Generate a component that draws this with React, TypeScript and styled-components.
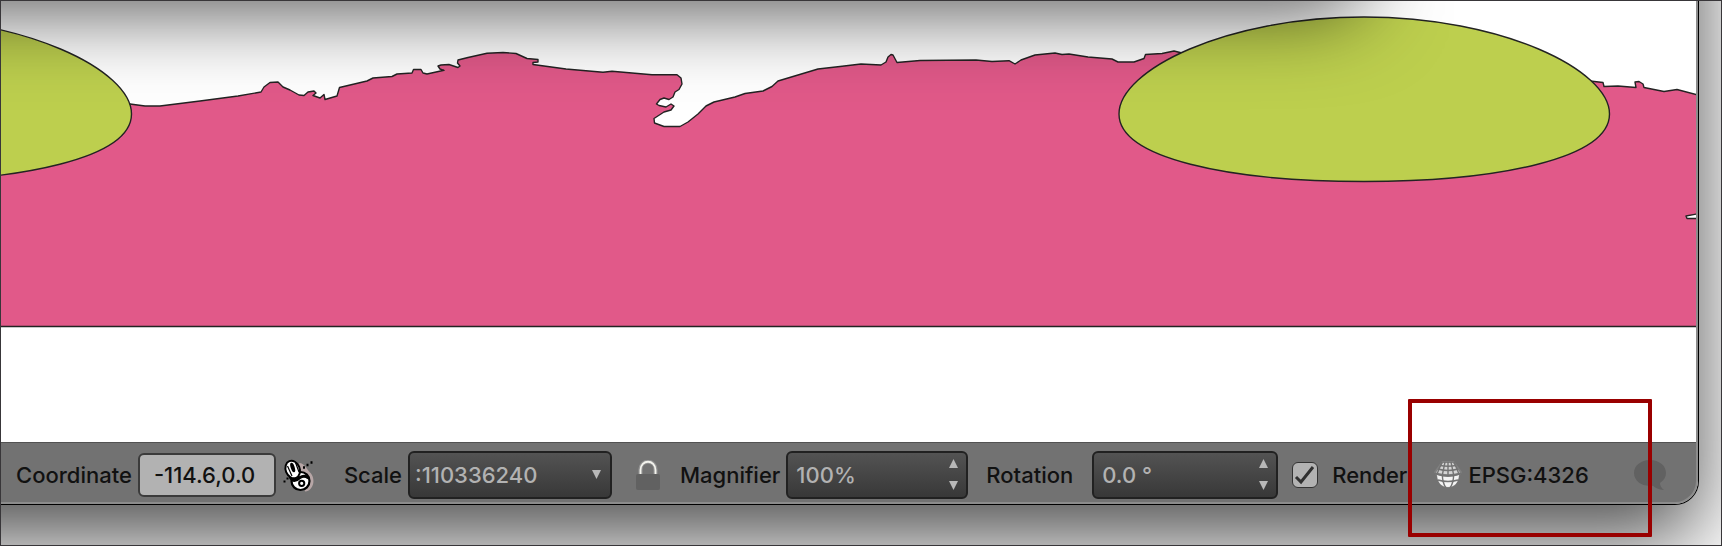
import React, { useState } from 'react';
import styled, { createGlobalStyle } from 'styled-components';

const GlobalStyle = createGlobalStyle`
  *, *::before, *::after { box-sizing: border-box; }
  body { margin: 0; background: #fff; }
  body, input, select, button { font: 500 22px/28px Inter, "Liberation Sans", sans-serif; }
`;

const Desktop = styled.div`
  position: relative;
  isolation: isolate;
  overflow: hidden;
  min-height: 100vh;
  padding: 0 22px 40px 0;
  border: 1px solid #383639;
  background: #fff;
`;

const AppWindow = styled.main`
  position: relative;
  border: solid #000;
  border-width: 0 1px 1px 0;
  border-radius: 0 0 24px 0;

  &::before {
    content: '';
    position: absolute;
    z-index: -1;
    inset: -300px 0 0 -300px;
    border-radius: 24px;
    box-shadow: 0 34px 84px rgba(0, 0, 0, 0.7);
  }
`;

const WindowBody = styled.div`
  overflow: hidden;
  border: solid #8c8c8c;
  border-width: 0 2px 2px 0;
  border-radius: 0 0 23px 0;
  background: #727272;
`;

/* Shade cast on this window by the one above it, outside the visible area. */
const UpperWindowShade = styled.div`
  position: absolute;
  left: -300px;
  right: 360px;
  top: -400px;
  height: 374px;
  pointer-events: none;
  border-radius: 24px;
  box-shadow: 0 34px 84px rgba(0, 0, 0, 0.7);
`;

const MapCanvas = styled.svg`
  display: block;
  width: 100%;
  height: auto;
  background: #fff;
`;

const StatusBar = styled.footer`
  display: flex;
  align-items: center;
  height: 60px;
  padding: 4px 30px 0 15px;
  border-top: 1px solid #525252;
  color: #111;
  white-space: nowrap;
`;

const Group = styled.div<{ $gap?: number; $before?: number }>`
  display: flex;
  align-items: center;
  flex: none;
  gap: ${(p) => p.$gap ?? 6}px;
  margin-left: ${(p) => p.$before ?? 0}px;
`;

const CoordinateInput = styled.input`
  width: 138px;
  height: 44px;
  padding: 0 14px;
  border: 2px solid #3b3b3b;
  border-radius: 6px;
  background: #b2b2b2;
  color: #111;
`;

const DarkField = styled.div<{ $width: number }>`
  display: flex;
  align-items: center;
  position: relative;
  width: ${(p) => p.$width}px;
  height: 48px;
  border: 2px solid #212121;
  border-radius: 6px;
  background: linear-gradient(#535353, #383838);
  color: #b2b2b2;
`;

const FieldSelect = styled.select`
  appearance: none;
  width: 100%;
  height: 100%;
  padding: 0 28px 0 5px;
  border: 0;
  background: transparent;
  color: inherit;
`;

const SelectArrow = styled.svg`
  position: absolute;
  right: 9px;
  pointer-events: none;
`;

const FieldInput = styled.input`
  flex: 1;
  min-width: 0;
  height: 100%;
  padding: 0 0 0 8px;
  border: 0;
  background: transparent;
  color: inherit;
`;

const Stepper = styled.div`
  display: flex;
  flex-direction: column;
  justify-content: space-between;
  height: 100%;
  padding: 5px 5px 5px 0;
`;

const IconButton = styled.button`
  display: flex;
  align-items: center;
  justify-content: center;
  flex: none;
  padding: 0;
  border: 0;
  background: transparent;
  color: inherit;
`;

const StepButton = styled(IconButton)`
  width: 16px;
  height: 12px;
`;

const MessagesButton = styled(IconButton)`
  margin-left: auto;
`;

const CheckboxBox = styled.input`
  appearance: none;
  flex: none;
  width: 26px;
  height: 26px;
  margin: 0;
  border: 1px solid #333;
  border-radius: 6px;
  background: #b2b2b2;

  &:checked {
    background: #b2b2b2
      url("data:image/svg+xml,%3Csvg xmlns='http://www.w3.org/2000/svg' viewBox='0 0 24 24' fill='none' stroke='%23303030' stroke-width='3'%3E%3Cpath d='M3 14l5 5L20 4'/%3E%3C/svg%3E")
      center / contain no-repeat;
  }
`;

const ProjectionButton = styled(IconButton)`
  gap: 6px;
  margin-left: 27px;
`;

const Highlight = styled.div`
  position: absolute;
  right: 69px;
  bottom: 8px;
  width: 244px;
  height: 138px;
  border: 4px solid #990000;
  border-radius: 1px;
  pointer-events: none;
`;

const COAST =
  'M-5 104L130 104 145 106 160 106 200 101 238 96 261 92 264 87 270 82.5 278 82 283 87 290 90 299 95 304 95.5 308 92 314 91 316 93 313 95.5 320 98 324 94.5 325 99.5 337 96 339.5 87.5 367 81 373 78 392 76.5 397 74 412 73 413.5 69.5 421 69.5 423 73 427 74 444 70.3 440 69 438 66 441 65 449 64.5 458 67.5 460 66 457.5 63 458 60 468 57.5 487 53.3 503 52.5 516 53.5 527 58.5 538 59.5 538 62 533 62.5 533 64.5 566 69 603 72.3 612 71.3 652 74.7 677 74.7 681 78 682 84 679 89.5 675 92 673 97 669 99.5 664 98 660 99.5 656.5 104 659 105.5 666 107 671 104 674 106 671 110 664 112 654 118.5 654.5 123 664 126.5 680 126.5 688 122 698 114 706 106 714 102 735 97 745 93.5 763 91 772 86.5 778 81 818 69 840 66.5 861 64 881 65 886 62 888 57 891 54.5 893 55 897 62.5 920 60.5 976 60 992 61.5 1009 60.7 1015 64 1021 60 1035 55 1055 53 1062 54.5 1069 54 1088 57 1112 59 1118 62 1134 62 1144 58.5 1145.5 54.5 1162 53.5 1174 51 1182 53 1400 70 1590 81 1603 82.5 1604 86.5 1618 86 1636 87.5 1635 82 1639 81.5 1643 84 1644 87.5 1664 91.5 1677 89.5 1702 96V326.5H-5Z';

const OVAL =
  'M1364 17C1502 17 1609.500 70 1609.500 114C1609.500 158 1500 181.500 1364 181.500C1228 181.500 1119 158 1119 114C1119 70 1226 17 1364 17Z';

function Map() {
  return (
    <MapCanvas viewBox="1 1 1695 441" role="img" aria-label="Map canvas">
      <g stroke="#232323" strokeWidth="1.4" strokeLinejoin="round">
        <path d={COAST} fill="#e15989" />
        <path d="M1702 213L1686 216 1687 218.5 1702 218.5Z" fill="#fff" />
        <g fill="#bdcf4e">
          <path d={OVAL} />
          <path d={OVAL} transform="translate(-1478 0)" />
        </g>
      </g>
    </MapCanvas>
  );
}

function Triangle({ up = false }: { up?: boolean }) {
  return (
    <svg width="9" height="9" viewBox="0 0 9 9" fill="#b8b8b8" aria-hidden="true">
      <path d={up ? 'M4.5 0L9 9H0Z' : 'M0 0H9L4.5 9Z'} />
    </svg>
  );
}

function MouseIcon() {
  return (
    <svg width="32" height="34" viewBox="-1 0 32 34" fill="none" stroke="#000" aria-hidden="true">
      <path d="M16 5C22 5 24 12 28 15.500C33 22 30 33 22 33.500Z" fill="#b7a6a6" stroke="none" />
      <path d="M0.500 23.500H2.500M3.500 20.500H5.500" strokeWidth="2" />
      <path d="M20 9.500H22M23.500 7H25.500M27.500 4.500H29.500" strokeWidth="2.400" />
      <circle cx="17.500" cy="23" r="9" fill="#fff" strokeWidth="2.200" />
      <path d="M7 18.500C10 25 14 22 17 19.500C20 17.500 23 18 25.500 20" strokeWidth="3" />
      <ellipse cx="9.700" cy="11.500" rx="7" ry="9" transform="rotate(-22 9.700 11.500)" fill="#fff" strokeWidth="2" />
      <path d="M4.500 8L9 18M12.500 4.500L16 14" strokeWidth="1.200" />
      <ellipse cx="9.700" cy="9.500" rx="2" ry="5" transform="rotate(-18 9.700 9.500)" fill="#000" stroke="none" />
      <circle cx="18.700" cy="25.300" r="2.600" fill="#fff" strokeWidth="2" />
    </svg>
  );
}

function LockIcon() {
  return (
    <svg width="24" height="30" viewBox="0 0 24 30" fill="none" aria-hidden="true">
      <path d="M4.500 14V10C4.500 -1 19.500 -1 19.500 10V14" stroke="#939393" strokeWidth="4" />
      <path d="M4.500 14V10C4.500 -1 19.500 -1 19.500 10V14" stroke="#f4f4ee" strokeWidth="1.800" />
      <rect y="14" width="24" height="16" rx="2" fill="#616161" />
    </svg>
  );
}

function GlobeIcon() {
  return (
    <svg width="28" height="28" viewBox="0 0 28 28" fill="none" aria-hidden="true">
      <path d="M8 0H20L28 11L25 16Q23 27 14 27Q5 27 3 16L0 11Z" fill="#808080" />
      <path d="M9 2H19L26 11.500Q14 15 2 11.500Z" fill="#d4d4d4" />
      <path d="M3 14Q14 18 25 14Q24 26 14 26Q4 26 3 14Z" fill="#f4f4f4" />
      <g stroke="#737373" strokeWidth="1.400">
        <path d="M6 4.500Q14 6 22 4.500M4 8Q14 11 24 8M1 12.500Q14 17 27 12.500M4 19Q14 22 24 19" />
        <path d="M11 1L8.500 13Q8 21 12 27M17 1L19.500 13Q20 21 16 27M14 1V15M8 1L3 13M20 1L25 13" />
      </g>
    </svg>
  );
}

function BubbleIcon() {
  return (
    <svg width="32" height="30" viewBox="0 0 32 30" fill="#616161" aria-hidden="true">
      <path d="M16 0C25 0 32 5.500 32 13C32 17 30 20 26 23Q26 27 30 30Q22 29 19 25.700C8 27 0 21 0 13C0 5.500 7 0 16 0Z" />
    </svg>
  );
}

interface SpinFieldProps {
  id: string;
  width: number;
  initial: string;
  name: string;
}

function SpinField({ id, width, initial, name }: SpinFieldProps) {
  const [value, setValue] = useState(initial);
  const unit = initial.endsWith('%') ? '%' : ' °';
  const step = (delta: number) => {
    const next = (parseFloat(value) || 0) + delta;
    setValue(unit === '%' ? `${next}%` : `${next.toFixed(1)} °`);
  };
  return (
    <DarkField $width={width}>
      <FieldInput id={id} value={value} onChange={(e) => setValue(e.target.value)} />
      <Stepper>
        <StepButton type="button" aria-label={`Increase ${name}`} onClick={() => step(1)}>
          <Triangle up />
        </StepButton>
        <StepButton type="button" aria-label={`Decrease ${name}`} onClick={() => step(-1)}>
          <Triangle />
        </StepButton>
      </Stepper>
    </DarkField>
  );
}

export default function App() {
  return (
    <>
      <GlobalStyle />
      <Desktop>
        <AppWindow>
          <WindowBody>
            <Map />
            <StatusBar>
              <Group>
                <label htmlFor="coordinate">Coordinate</label>
                <CoordinateInput id="coordinate" defaultValue="-114.6,0.0" />
                <IconButton type="button" aria-label="Toggle extents and mouse position display">
                  <MouseIcon />
                </IconButton>
              </Group>
              <Group $before={30}>
                <label htmlFor="scale">Scale</label>
                <DarkField $width={204}>
                  <FieldSelect id="scale">
                    <option>:110336240</option>
                  </FieldSelect>
                  <SelectArrow width="9" height="9" viewBox="0 0 9 9" fill="#b8b8b8" aria-hidden="true">
                    <path d="M0 0H9L4.5 9Z" />
                  </SelectArrow>
                </DarkField>
              </Group>
              <Group $before={24} $gap={20}>
                <IconButton type="button" aria-label="Lock scale">
                  <LockIcon />
                </IconButton>
                <Group>
                  <label htmlFor="magnifier">Magnifier</label>
                  <SpinField id="magnifier" name="magnifier" width={182} initial="100%" />
                </Group>
              </Group>
              <Group $before={18} $gap={19}>
                <label htmlFor="rotation">Rotation</label>
                <SpinField id="rotation" name="rotation" width={186} initial="0.0 °" />
              </Group>
              <Group $before={14} $gap={14}>
                <CheckboxBox type="checkbox" id="render" defaultChecked />
                <label htmlFor="render">Render</label>
              </Group>
              <ProjectionButton type="button">
                <GlobeIcon />
                EPSG:4326
              </ProjectionButton>
              <MessagesButton type="button" aria-label="Messages">
                <BubbleIcon />
              </MessagesButton>
            </StatusBar>
          </WindowBody>
        </AppWindow>
        <UpperWindowShade />
        <Highlight />
      </Desktop>
    </>
  );
}
